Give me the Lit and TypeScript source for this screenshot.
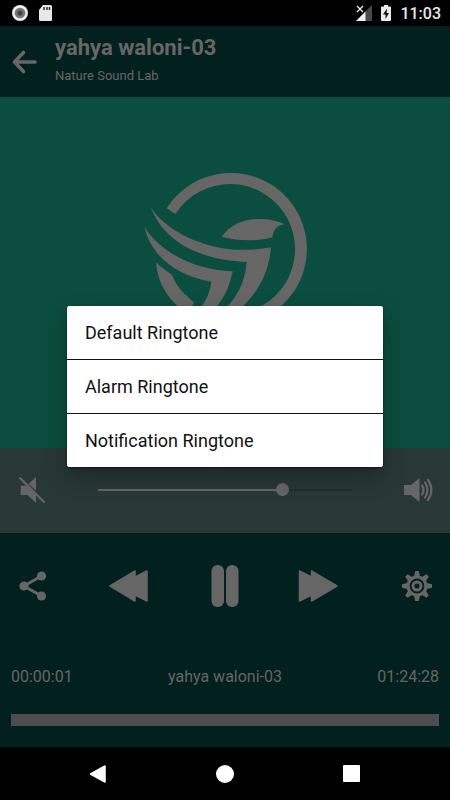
import { LitElement, html, css, svg } from "lit";
import { customElement, property, state } from "lit/decorators.js";

const bird = svg`
  <path d="M166.7 208.3A76 76 0 1 1 230 325L230 314A65 65 0 1 0 175.3 214Z"/>
  <path d="M150.7 207.3C166 231 200 246 230 249.3C245 250.5 258 249.5 271 247.3C269 270 261 288 243.3 306C238 311 233 315 228 318L219 314C236 301 245 283 246.7 262C205 260 166 246 150.7 207.3Z"/>
  <path d="M144.3 226.7C162 254 196 270 232.7 271.3C230 284 226 295 217.3 306L208 316L196 313C204 305 210 294 211.3 281.7C178 276 152 258 144.3 226.7Z"/>
  <path d="M156 262.3C161 267 166 271 172 274.7C176 286 184 294 194 302.3L190 310L200 320C176 310 158 290 156 262.3Z"/>
  <path d="M221.7 236.7C231 224 245 218.5 261 219C270 219 278 221 284.3 224.3C277 225 273.5 230 272.3 237.5C257 241.5 238 241 221.7 236.7Z"/>`;

@customElement("status-bar")
class StatusBar extends LitElement {
  static styles = css`
    :host { display: flex; justify-content: space-between; align-items: center; height: 26px;
      padding: 0 9px 0 11px; background: #000; color: #e8e8e8; }
    .group { display: flex; align-items: center; gap: 8px; }
    svg { display: block; }
    .time { font-size: 16px; line-height: 20px; font-weight: 500; padding-top: 2px; }
  `;
  render() {
    return html`
      <div class="group">
        <svg width="18" height="18" viewBox="0 0 18 18">
          <circle cx="9" cy="9" r="8" fill="#ececec"/><circle cx="9" cy="9" r="5.3" fill="#777"/><circle cx="9" cy="9" r="2.6" fill="#444"/>
        </svg>
        <svg width="16" height="18" viewBox="0 0 16 18">
          <path d="M6 1H13.5Q15 1 15 2.5V15.5Q15 17 13.5 17H3.5Q2 17 2 15.5V6Z" fill="#e8e8e8"/>
          <path d="M7 3V6M10 3V6M12.5 3V6" stroke="#222" stroke-width="1.4"/>
        </svg>
      </div>
      <div class="group">
        <svg width="16" height="18" viewBox="0 0 16 18">
          <path d="M16 1V17H0Z" fill="#4a4a4a"/><path d="M9.5 7.5V17H0Z" fill="#f0f0f0"/>
          <path d="M0 0H9V7L7 9L0 8Z" fill="#000"/>
          <path d="M1 2L7 8M7 2L1 8" stroke="#eee" stroke-width="1.3"/>
        </svg>
        <svg width="12" height="18" viewBox="0 0 12 18">
          <path d="M4 1H8V2.5H10Q11 2.5 11 3.5V16Q11 17 10 17H2Q1 17 1 16V3.5Q1 2.5 2 2.5H4Z" fill="#ececec"/>
          <path d="M7 4.5L3 10.5H5.5V15L9 9H6.7Z" fill="#111"/>
        </svg>
        <span class="time">11:03</span>
      </div>`;
  }
}

@customElement("ringtone-dialog")
class RingtoneDialog extends LitElement {
  @property({ type: Array }) options: string[] = [];
  static styles = css`
    :host { display: block; width: calc(100% - 134px); background: #fff; border-radius: 3px; overflow: hidden;
      box-shadow: 0 1px 2px rgba(0, 0, 0, .5), 0 10px 22px rgba(0, 0, 0, .3); }
    .item { display: block; box-sizing: border-box; width: 100%; height: 53px; padding: 1px 18px 0; border: 0;
      background: #fff; color: #111; font: 400 18px/24px Roboto, sans-serif; text-align: left; }
    .item + .item { height: 54px; border-top: 1px solid #111; }
  `;
  render() {
    return html`${this.options.map((o) => html`<button class="item">${o}</button>`)}`;
  }
}

@customElement("app-root")
class AppRoot extends LitElement {
  @state() private volume = 74;
  static styles = css`
    :host { display: flex; flex-direction: column; min-height: 100vh; background: #02201e;
      color: #666; font-family: Roboto, sans-serif; }
    * { box-sizing: border-box; }
    button { display: grid; place-items: center; padding: 0; border: 0; background: none; color: inherit; }
    svg { display: block; fill: currentColor; overflow: visible; }
    .screen { flex: 1; display: flex; flex-direction: column; position: relative; }
    .head { display: flex; align-items: center; gap: 15px; height: 71px; padding: 0 10px; }
    .title { margin: 0; font-size: 22px; line-height: 28px; font-weight: 700; }
    .sub { margin: 0; font-size: 13px; line-height: 18px; padding-top: 5px; }
    .text { padding-bottom: 5px; }
    .art { flex: 1; display: grid; place-items: center; min-height: 220px; background: #0b4d3e; }
    .volume { display: flex; align-items: center; gap: 40px; height: 85px; padding: 0 12px 2px; background: #283836; }
    .icon { width: 40px; height: 44px; }
    .slider { flex: 1; min-width: 0; height: 20px; margin: 0; appearance: none; background: none; }
    .slider::-webkit-slider-runnable-track { height: 2px; margin: 0 6px;
      background: linear-gradient(90deg, #666 0 74%, #1e302e 74%); }
    .slider::-webkit-slider-thumb { appearance: none; width: 13px; height: 13px; margin-top: -6px;
      border-radius: 50%; background: #666; }
    .controls { display: flex; align-items: center; justify-content: space-between; height: 107px; padding: 0 13px 2px; }
    .times { display: flex; justify-content: space-between; padding: 26px 11px 0; font-size: 16px; line-height: 22px; }
    .bar { display: block; appearance: none; width: auto; height: 12px; margin: 26px 11px 21px; border: 0; background: #4d4d4f; }
    .bar::-webkit-progress-bar { background: #4d4d4f; }
    .bar::-webkit-progress-value { background: #4d4d4f; }
    .over { position: absolute; inset: 0; display: grid; place-items: center; }
    .nav { display: grid; grid-template-columns: repeat(3, 1fr); height: 53px; padding: 0 35px; background: #000; color: #fff; }
  `;
  render() {
    return html`
      <status-bar></status-bar>
      <main class="screen">
        <header class="head">
          <button aria-label="Back">
            <svg width="30" height="30" viewBox="0 0 30 30"><path d="M13.5 5.5L4.500 15L13.5 24.5M4.5 15H25" fill="none" stroke="currentColor" stroke-width="3.6" stroke-linecap="round" stroke-linejoin="round"/></svg>
          </button>
          <div class="text">
            <h1 class="title">yahya waloni-03</h1>
            <p class="sub">Nature Sound Lab</p>
          </div>
        </header>
        <section class="art">
          <svg width="162" height="200" viewBox="144 173 162 200">${bird}</svg>
        </section>
        <section class="volume">
          <button class="icon" aria-label="Mute">
            <svg width="28" height="28" viewBox="0 0 28 28">
              <path d="M2.7 9.700H8.500L18 19V27L9.5 19H2.700ZM18 1V14.500L10.5 8Z"/>
              <path d="M1.5 1.5L26.5 26.500" stroke="currentColor" stroke-width="2.2"/>
            </svg>
          </button>
          <input class="slider" type="range" aria-label="Volume" min="0" max="100" .value=${String(this.volume)}>
          <button class="icon" aria-label="Full volume">
            <svg width="30" height="26" viewBox="0 0 30 26">
              <path d="M1 8H8L16.5 1V25L8 18H1Z"/>
              <path d="M19 8.5Q22 13 19 17.5M22 5.5Q27 13 22 20.5M25 3Q32 13 25 23" fill="none" stroke="currentColor" stroke-width="2.2" stroke-linecap="round"/>
            </svg>
          </button>
        </section>
        <section class="controls">
          <button class="icon" aria-label="Share">
            <svg width="28" height="30" viewBox="0 0 28 30">
              <path d="M22.5 5L5 15L22.5 25" fill="none" stroke="currentColor" stroke-width="3"/>
              <circle cx="22.5" cy="5" r="4.6"/><circle cx="5" cy="15" r="4.6"/><circle cx="22.5" cy="25" r="4.6"/>
            </svg>
          </button>
          <button class="icon" aria-label="Rewind">
            <svg width="40" height="32" viewBox="0 0 40 32"><path d="M1 16L26 1V7L38 1V31L26 25V31Z" stroke="currentColor" stroke-width="1.5" stroke-linejoin="round"/></svg>
          </button>
          <button class="icon" aria-label="Pause">
            <svg width="28" height="42" viewBox="0 0 28 42"><rect x="0.5" width="12.5" height="42" rx="6"/><rect x="15" width="12.5" height="42" rx="6"/></svg>
          </button>
          <button class="icon" aria-label="Fast forward">
            <svg width="40" height="32" viewBox="4 0 40 32"><path d="M40 16L14.5 1V7L2.500 1V31L14.5 25V31Z" stroke="currentColor" stroke-width="1.5" stroke-linejoin="round"/></svg>
          </button>
          <button class="icon" aria-label="Settings">
            <svg width="30" height="30" viewBox="-15 -15 30 30">
              ${[0, 45, 90, 135, 180, 225, 270, 315].map(
                (a) => svg`<path transform="rotate(${a})" d="M-3 -9L-1.9 -14.5Q-1.8 -15 -1.3 -15H1.3Q1.8 -15 1.9 -14.5L3 -9Z"/>`
              )}
              <circle r="9" fill="none" stroke="currentColor" stroke-width="3.2"/>
              <circle r="4" fill="none" stroke="currentColor" stroke-width="3"/>
            </svg>
          </button>
        </section>
        <div class="times"><span>00:00:01</span><span>yahya waloni-03</span><span>01:24:28</span></div>
        <progress class="bar" aria-label="Playback position" max="5068" value="1"></progress>
        <div class="over">
          <ringtone-dialog role="dialog" aria-label="Set as ringtone"
            .options=${["Default Ringtone", "Alarm Ringtone", "Notification Ringtone"]}></ringtone-dialog>
        </div>
      </main>
      <nav class="nav">
        <button aria-label="System back"><svg width="18" height="20" viewBox="0 0 18 20"><path d="M1.5 10L16 2V18Z" stroke="currentColor" stroke-width="1.5" stroke-linejoin="round"/></svg></button>
        <button aria-label="Home"><svg width="18" height="18" viewBox="0 0 18 18"><circle cx="9" cy="9" r="9"/></svg></button>
        <button aria-label="Recent apps"><svg width="17" height="17" viewBox="0 0 17 17"><rect width="17" height="17" rx="1"/></svg></button>
      </nav>`;
  }
}
